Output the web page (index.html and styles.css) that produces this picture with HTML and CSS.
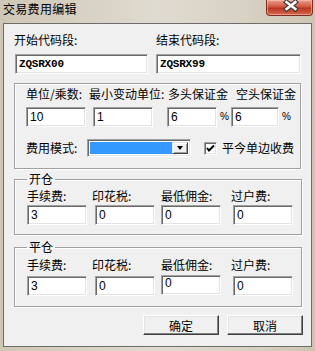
FILE: index.html
```html
<!DOCTYPE html>
<html lang="zh-CN">
<head>
    <meta charset="UTF-8">
    <meta name="viewport" content="width=device-width, initial-scale=1.0">
    <title>交易费用编辑</title>
    <link rel="stylesheet" href="styles.css">
</head>
<body>
    <div class="window">
        <div class="titlebar">
            <span class="title">交易费用编辑</span>
            <button class="close" type="button">
                <svg width="46" height="16" viewBox="0 0 46 16">
                    <path d="M20 2 L29 9 M29 2 L20 9" stroke="#3c3c3c" stroke-width="5" stroke-linecap="square"/>
                    <path d="M20 2 L29 9 M29 2 L20 9" stroke="#fff" stroke-width="2.6" stroke-linecap="square"/>
                </svg>
            </button>
        </div>
        <div class="client">
            <div class="codes">
                <div class="code-field">
                    <div class="lbl">开始代码段:</div>
                    <input class="box code first" type="text" value="ZQSRX00">
                </div>
                <div class="code-field second">
                    <div class="lbl">结束代码段:</div>
                    <input class="box code" type="text" value="ZQSRX99">
                </div>
            </div>

            <div class="group">
                <div class="row labels">
                    <span class="c1">单位/乘数:</span>
                    <span class="c2">最小变动单位:</span>
                    <span class="c3">多头保证金</span>
                    <span>空头保证金</span>
                </div>
                <div class="row inputs">
                    <input class="box num i1" type="text" value="10">
                    <input class="box num i2" type="text" value="1">
                    <input class="box num i3" type="text" value="6">
                    <span class="pct">%</span>
                    <input class="box num i4" type="text" value="6">
                    <span class="pct">%</span>
                </div>
                <div class="row mode">
                    <span class="mode-lbl">费用模式:</span>
                    <div class="combo">
                        <div class="combo-value"></div>
                        <div class="combo-btn"><span class="arrow"></span></div>
                    </div>
                    <span class="check">
                        <svg width="9" height="9" viewBox="0 0 9 9">
                            <path d="M1 4 L3 6.5 L8 1.5" stroke="#000" stroke-width="2" fill="none"/>
                        </svg>
                    </span>
                    <span class="check-lbl">平今单边收费</span>
                </div>
            </div>

            <fieldset class="fee open">
                <legend>开仓</legend>
                <div class="row labels">
                    <span class="f1">手续费:</span>
                    <span class="f2">印花税:</span>
                    <span class="f3">最低佣金:</span>
                    <span>过户费:</span>
                </div>
                <div class="row inputs">
                    <input class="box num g1" type="text" value="3">
                    <input class="box num g2" type="text" value="0">
                    <input class="box num g3" type="text" value="0">
                    <input class="box num g4" type="text" value="0">
                </div>
            </fieldset>

            <fieldset class="fee close-pos">
                <legend>平仓</legend>
                <div class="row labels">
                    <span class="f1">手续费:</span>
                    <span class="f2">印花税:</span>
                    <span class="f3">最低佣金:</span>
                    <span>过户费:</span>
                </div>
                <div class="row inputs">
                    <input class="box num g1" type="text" value="3">
                    <input class="box num g2" type="text" value="0">
                    <input class="box num g3 raised" type="text" value="0">
                    <input class="box num g4" type="text" value="0">
                </div>
            </fieldset>

            <div class="buttons">
                <button class="btn" type="button">确定</button>
                <button class="btn" type="button">取消</button>
            </div>
        </div>
    </div>
</body>
</html>
```

FILE: styles.css
```css
body {
    margin: 0;
    font-family: "Noto Sans CJK SC", sans-serif;
    font-size: 12px;
    line-height: 14px;
    color: #000;
}
.window {
    width: 315px;
    height: 351px;
    background: linear-gradient(90deg, #cfc7b6 0%, #d9d3c6 30%, #e0dbd0 50%, #d9d3c6 75%, #cdc5b3 100%);
}
.titlebar {
    height: 23px;
    display: flex;
    align-items: flex-start;
}
.title {
    padding: 2px 0 0 3px;
    font-size: 12px;
    letter-spacing: 0.3px;
}
.close {
    margin-left: auto;
    margin-right: 2px;
    width: 47px;
    height: 16px;
    padding: 0;
    border: 1px solid #7c2e22;
    border-top: none;
    border-radius: 0 0 4px 4px;
    background: linear-gradient(#e9a08f, #d2553f 45%, #b93620 55%, #d86a4e);
    box-shadow: inset 0 0 0 1px rgba(255, 210, 190, 0.5);
    display: flex;
}
.client {
    margin: 0 3px;
    height: 324px;
    box-sizing: border-box;
    border: 1px solid #6d6d6d;
    background: #f0f0f0;
    padding: 9px 0 0 10px;
}
.codes {
    display: flex;
}
.code-field .lbl {
    height: 14px;
    margin-bottom: 7px;
}
.code-field .first {
    margin-left: 1px;
    width: 133px;
}
.code-field.second {
    margin-left: 8px;
}
.code-field.second .box {
    width: 145px;
}
.box {
    box-sizing: border-box;
    height: 20px;
    margin: 0;
    padding: 0 0 0 3px;
    border: 1px solid;
    border-color: #a0a0a0 #fff #fff #a0a0a0;
    box-shadow: inset 1px 1px #696969, inset -1px -1px #e3e3e3;
    background: #fff;
    outline: none;
    display: block;
}
.code {
    font-family: "Liberation Mono", monospace;
    font-size: 11px;
    font-weight: bold;
    letter-spacing: -0.2px;
}
.num {
    font-family: "Liberation Sans", sans-serif;
    font-size: 12px;
}
.row {
    display: flex;
    align-items: center;
}
.group {
    width: 287px;
    box-sizing: border-box;
    margin-top: 9px;
    border: 1px solid #a0a0a0;
    box-shadow: inset 1px 1px #fff, 1px 1px #fff;
    padding: 3px 0 11px 11px;
}
.group .labels span {
    flex: none;
}
.group .c1 { width: 63px; }
.group .c2 { width: 79px; }
.group .c3 { width: 68px; }
.group .inputs {
    margin-top: 6px;
}
.i1, .i2 { width: 60px; }
.i2 { margin-left: 7px; }
.i3 { width: 50px; margin-left: 14px; }
.i4 { width: 48px; }
.pct {
    width: 14px;
    padding-left: 3px;
    box-sizing: border-box;
    font-family: "Liberation Sans", sans-serif;
    font-size: 10px;
}
.mode {
    margin-top: 12px;
    height: 18px;
}
.mode-lbl {
    width: 61px;
}
.combo {
    box-sizing: border-box;
    width: 104px;
    height: 18px;
    border: 1px solid;
    border-color: #a0a0a0 #fff #fff #a0a0a0;
    box-shadow: inset 1px 1px #696969, inset -1px -1px #e3e3e3;
    padding: 2px;
    display: flex;
    background: #fff;
}
.combo-value {
    flex: 1;
    background: #3399ff;
}
.combo-btn {
    box-sizing: border-box;
    width: 16px;
    background: #f0f0f0;
    border: 1px solid;
    border-color: #e3e3e3 #404040 #404040 #e3e3e3;
    box-shadow: inset 1px 1px #fff, inset -1px -1px #a0a0a0;
    display: flex;
    align-items: center;
    justify-content: center;
}
.arrow {
    width: 0;
    height: 0;
    border-left: 3.5px solid transparent;
    border-right: 3.5px solid transparent;
    border-top: 4px solid #000;
}
.check {
    box-sizing: border-box;
    width: 13px;
    height: 13px;
    margin-left: 13px;
    border: 1px solid;
    border-color: #a0a0a0 #fff #fff #a0a0a0;
    box-shadow: inset 1px 1px #696969, inset -1px -1px #e3e3e3;
    background: #fff;
    display: flex;
    align-items: center;
    justify-content: center;
}
.check-lbl {
    margin-left: 5px;
}
.fee {
    width: 288px;
    box-sizing: border-box;
    margin: 3px 0 0;
    padding: 3px 0 9px 12px;
    border: 1px solid #a0a0a0;
    box-shadow: inset 1px 1px #fff, 1px 1px #fff;
    min-width: 0;
}
.fee legend {
    padding: 0 2px;
    margin-left: 0;
    line-height: 14px;
}
.fee .labels span {
    flex: none;
}
.fee .f1 { width: 65px; }
.fee .f2 { width: 69px; }
.fee .f3 { width: 70px; }
.fee .inputs {
    margin-top: 2px;
    align-items: flex-start;
}
.g1, .g2, .g3, .g4 { width: 60px; }
.g2 { margin-left: 8px; }
.g3 { margin-left: 6px; }
.g4 { margin-left: 12px; }
.fee.close-pos {
    margin-top: 5px;
    padding-top: 4px;
    padding-bottom: 10px;
}
.fee.close-pos .inputs {
    margin-top: 4px;
}
.raised {
    margin-top: -1px;
    padding-bottom: 4px;
}
.buttons {
    width: 289px;
    margin-top: 8px;
    display: flex;
    justify-content: flex-end;
    gap: 8px;
}
.btn {
    box-sizing: border-box;
    width: 76px;
    height: 20px;
    padding: 0;
    font-family: "Noto Sans CJK SC", sans-serif;
    font-size: 12px;
    background: #f0f0f0;
    border: 1px solid;
    border-color: #fff #404040 #404040 #fff;
    box-shadow: inset -1px -1px #808080, inset 1px 1px #e3e3e3;
}
```
